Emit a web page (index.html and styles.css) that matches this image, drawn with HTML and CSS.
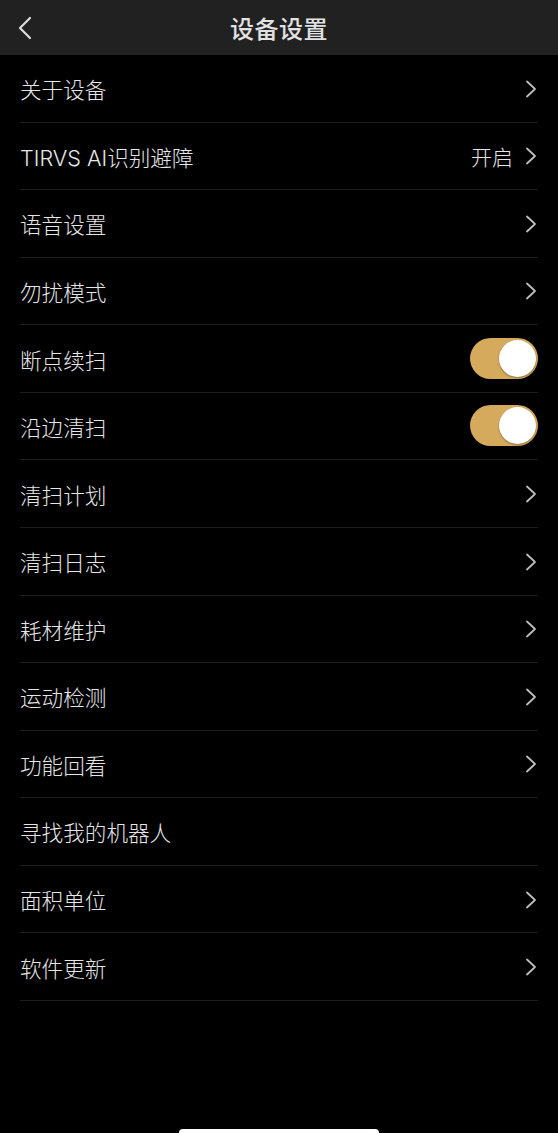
FILE: index.html
```html
<!DOCTYPE html>
<html lang="zh-CN">
<head>
<meta charset="UTF-8" />
<meta name="viewport" content="width=device-width, initial-scale=1" />
<title>设备设置</title>
<link rel="stylesheet" href="styles.css">
</head>
<body>
  <div class="page">
    <header class="nav">
      <button class="back-btn" aria-label="返回">
        <svg viewBox="0 0 18 24" aria-hidden="true"><path d="M14 2 L4 12 L14 22" /></svg>
      </button>
      <h1 class="nav-title">设备设置</h1>
      <span></span>
    </header>

    <ul class="settings">
      <li class="row"><span class="label">关于设备</span><svg class="chevron" viewBox="0 0 12 18"><path d="M2 1.5 L10 9 L2 16.5" /></svg></li>
      <li class="row"><span class="label">TIRVS AI识别避障</span><span class="value">开启<svg class="chevron" viewBox="0 0 12 18"><path d="M2 1.5 L10 9 L2 16.5" /></svg></span></li>
      <li class="row"><span class="label">语音设置</span><svg class="chevron" viewBox="0 0 12 18"><path d="M2 1.5 L10 9 L2 16.5" /></svg></li>
      <li class="row"><span class="label">勿扰模式</span><svg class="chevron" viewBox="0 0 12 18"><path d="M2 1.5 L10 9 L2 16.5" /></svg></li>
      <li class="row"><span class="label">断点续扫</span><span class="switch on"><span class="knob"></span></span></li>
      <li class="row"><span class="label">沿边清扫</span><span class="switch on"><span class="knob"></span></span></li>
      <li class="row"><span class="label">清扫计划</span><svg class="chevron" viewBox="0 0 12 18"><path d="M2 1.5 L10 9 L2 16.5" /></svg></li>
      <li class="row"><span class="label">清扫日志</span><svg class="chevron" viewBox="0 0 12 18"><path d="M2 1.5 L10 9 L2 16.5" /></svg></li>
      <li class="row"><span class="label">耗材维护</span><svg class="chevron" viewBox="0 0 12 18"><path d="M2 1.5 L10 9 L2 16.5" /></svg></li>
      <li class="row"><span class="label">运动检测</span><svg class="chevron" viewBox="0 0 12 18"><path d="M2 1.5 L10 9 L2 16.5" /></svg></li>
      <li class="row"><span class="label">功能回看</span><svg class="chevron" viewBox="0 0 12 18"><path d="M2 1.5 L10 9 L2 16.5" /></svg></li>
      <li class="row"><span class="label">寻找我的机器人</span></li>
      <li class="row"><span class="label">面积单位</span><svg class="chevron" viewBox="0 0 12 18"><path d="M2 1.5 L10 9 L2 16.5" /></svg></li>
      <li class="row"><span class="label">软件更新</span><svg class="chevron" viewBox="0 0 12 18"><path d="M2 1.5 L10 9 L2 16.5" /></svg></li>
    </ul>

    <div class="home-indicator"></div>
  </div>
</body>
</html>
```

FILE: styles.css
```css
:root {
  --bg: #000;
  --nav-bg: #212121;
  --text: #e6e6e6;
  --muted: #bdbdbd;
  --line: #1e1e1e;
  --gold: #d5aa5d;
}
html, body {
  margin: 0;
  padding: 0;
  background: var(--bg);
  font-family: "Noto Sans CJK SC", "Noto Sans", sans-serif;
  color: var(--text);
}
.page {
  width: 558px;
  height: 1133px;
  display: flex;
  flex-direction: column;
  overflow: hidden;
}
.nav {
  height: 55px;
  flex: none;
  background: var(--nav-bg);
  display: grid;
  grid-template-columns: 60px 1fr 60px;
  align-items: center;
}
.back-btn {
  background: transparent;
  border: none;
  padding: 0 0 0 16px;
  height: 55px;
  display: flex;
  align-items: center;
  cursor: pointer;
}
.back-btn svg {
  width: 18px;
  height: 24px;
  fill: none;
  stroke: #dcdcdc;
  stroke-width: 2.2;
  stroke-linecap: round;
  stroke-linejoin: round;
}
.nav-title {
  margin: 0;
  text-align: center;
  font-size: 24px;
  font-weight: 500;
  color: #e2e2e2;
  letter-spacing: 0.5px;
}
.settings {
  list-style: none;
  margin: 0;
  padding: 0 20px;
}
.row {
  height: 67.57px;
  box-sizing: border-box;
  border-bottom: 1px solid var(--line);
  display: flex;
  align-items: center;
  justify-content: space-between;
  padding-top: 1px;
}
.label {
  font-family: Inter, "Noto Sans CJK SC", sans-serif;
  font-size: 21.6px;
  font-weight: 300;
  color: var(--text);
}
.value {
  display: flex;
  align-items: center;
  gap: 12px;
  font-size: 21px;
  font-weight: 300;
  color: var(--text);
}
.chevron {
  width: 12px;
  height: 18px;
  fill: none;
  stroke: var(--muted);
  stroke-width: 1.8;
  stroke-linecap: round;
  stroke-linejoin: round;
  margin-right: 1px;
}
.switch {
  width: 68px;
  height: 41px;
  border-radius: 21px;
  background: var(--gold);
  display: flex;
  align-items: center;
  justify-content: flex-end;
  padding: 0 2px;
  box-sizing: border-box;
  margin-bottom: 2px;
}
.knob {
  width: 37px;
  height: 37px;
  border-radius: 50%;
  background: #fff;
  box-shadow: 0 1px 2px rgba(0, 0, 0, 0.35);
}
.home-indicator {
  margin: auto auto -4px;
  width: 200px;
  height: 8px;
  border-radius: 4px;
  background: #fff;
}
```
